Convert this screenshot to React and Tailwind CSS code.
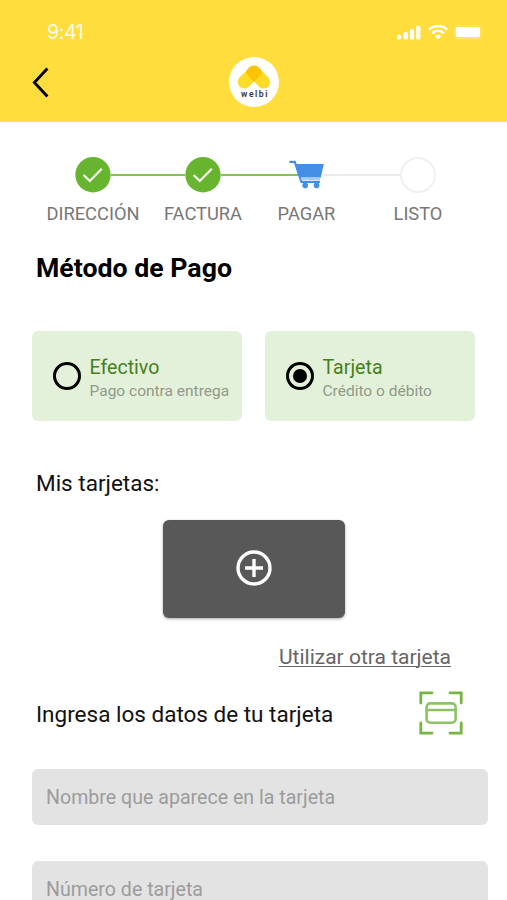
import React, { useState } from 'react';

const BackIcon = () => (
  <svg width="18" height="32" viewBox="0 0 18 32" fill="none" stroke="#000" strokeWidth="2.9">
    <path d="M15.4 2.4 L2.4 16.4 L15.4 30.4" />
  </svg>
);

const SignalIcon = () => (
  <svg width="24" height="16" viewBox="0 0 24 16" fill="#fff">
    <rect x="0.2" y="9.8" width="4.2" height="4.8" rx="1.6" />
    <rect x="6.6" y="7" width="4.2" height="7.6" rx="1.6" />
    <rect x="12.9" y="3.8" width="4.2" height="10.8" rx="1.6" />
    <rect x="19.2" y="0.6" width="4.2" height="14" rx="1.6" />
  </svg>
);

const WifiIcon = () => (
  <svg width="20" height="16" viewBox="0 0 20 16" fill="none" stroke="#fff" strokeWidth="2.6">
    <path d="M1 4.6 C6 -0.2 14 -0.2 19 4.6" />
    <path d="M4.2 8.2 C7.5 5 12.5 5 15.8 8.2" />
    <path d="M10 14.4 L6.8 11 C8.6 9.3 11.4 9.3 13.2 11 Z" fill="#fff" stroke="none" />
  </svg>
);

const BatteryIcon = () => (
  <svg width="32" height="16" viewBox="0 0 32 16">
    <rect x="0.7" y="0.7" width="26.6" height="13" rx="3.2" fill="none" stroke="#fff" strokeOpacity="0.2" strokeWidth="1.4" />
    <path d="M28.6 5 C30.4 5.8 30.4 8.6 28.6 9.4 Z" fill="#fff" fillOpacity="0.25" />
    <rect x="1.8" y="2" width="24.2" height="10.2" rx="1.6" fill="#fff" />
  </svg>
);

const Logo = () => (
  <div className="ml-[2px] w-[50px] h-[50px] rounded-full bg-white flex flex-col items-center pt-[7px]">
    <svg width="36" height="26" viewBox="0 0 36 26" fill="none" strokeLinecap="round" strokeWidth="13">
      <path d="M18 8.4 L8.2 18" stroke="#fedb27" />
      <path d="M18 8.4 L27.8 18" stroke="#fedb27" />
      <path d="M18 1.6 a7 7 0 0 1 5 2 L24.6 5.2 C26 8 26.2 9.6 24.4 11.6 L18 17.4 L11.6 11.6 C9.8 9.6 10 8 11.4 5.2 L13 3.6 a7 7 0 0 1 5 -2 Z" fill="#fcc203" />
    </svg>
    <span className="pl-px text-[8.6px] leading-[9px] font-semibold tracking-[1.5px] text-[#333]">welbi</span>
  </div>
);

const CheckCircle = () => (
  <svg className="shrink-0" width="36" height="36" viewBox="0 0 36 36" fill="none">
    <circle cx="18" cy="17.7" r="17.7" fill="#67b52e" />
    <path d="M8.6 18 L14.8 24 L26.8 11.8" stroke="#f4fbef" strokeWidth="2.3" />
  </svg>
);

const CartIcon = () => (
  <svg className="shrink-0 -ml-2" width="36" height="30" viewBox="0 0 36 30" fill="#448ee6">
    <path d="M0.4 1.8 H5.8 L12.4 22 H31" fill="none" stroke="#448ee6" strokeWidth="2.2" />
    <path d="M6.4 4 H34.8 L31.8 17.4 H10.8 Z" />
    <path d="M11.6 18 H31.4 L31 20.6 H12.6 Z" fill="#a9cbf3" />
    <circle cx="16.2" cy="25.4" r="2.8" />
    <circle cx="27.5" cy="25.4" r="2.8" />
  </svg>
);

const ScanCardIcon = () => (
  <svg width="44" height="44" viewBox="0 0 44 44" fill="none" stroke="#76b543" strokeWidth="2.8" strokeLinecap="round">
    <path d="M1.8 12 V1.8 H13 M31 1.8 H42.2 V12 M42.2 32 V42.2 H31 M13 42.2 H1.8 V32" />
    <rect x="7.6" y="12.4" width="29" height="19.4" rx="3.8" stroke="#8cc264" strokeWidth="2.6" />
    <path d="M7.6 19 H36.6" stroke="#8cc264" strokeWidth="2.4" />
  </svg>
);

const Header = () => (
  <header className="h-[122px] bg-[#ffdd3c]">
    <div className="h-[50px] pt-[15px] pl-[47px] pr-[18px] flex justify-between items-center">
      <span className="font-['Inter'] text-[19.5px] text-white/90 tracking-[-0.4px]">9:41</span>
      <div className="flex items-center gap-[7px]">
        <SignalIcon />
        <WifiIcon />
        <div className="-ml-px pr-[3px]">
          <BatteryIcon />
        </div>
      </div>
    </div>
    <div className="h-[64px] px-8 grid grid-cols-3 items-center">
      <BackIcon />
      <div className="flex justify-center">
        <Logo />
      </div>
    </div>
  </header>
);

const Stepper = () => (
  <div className="pt-[34px]">
    <div className="h-[37px] pl-[75px] flex items-center">
      <CheckCircle />
      <div className="w-[74px] h-[2px] bg-[#83c355]" />
      <CheckCircle />
      <div className="w-[78px] h-[2px] bg-[#83c355]" />
      <div className="-ml-[2px] flex">
        <CartIcon />
      </div>
      <div className="-ml-[2px] w-[77px] h-[2px] bg-[#ebebeb]" />
      <div className="w-9 h-9 rounded-full border-2 border-[#f0f0f0]" />
    </div>
    <div className="mt-2 ml-[38px] flex text-center text-[18.3px] leading-[25px] text-[#777]">
      <span className="w-[110px]">DIRECCIÓN</span>
      <span className="w-[110px]">FACTURA</span>
      <span className="w-[97px]">PAGAR</span>
      <span className="w-[126px]">LISTO</span>
    </div>
  </div>
);

const PaymentOption = ({ title, detail, selected, onSelect }) => (
  <button
    onClick={onSelect}
    className="w-[210px] h-[90px] pl-[21px] rounded-md bg-[#e4f1da] flex items-center gap-[8.5px] text-left"
  >
    <span className="w-[28px] h-[28px] shrink-0 rounded-full border-[3px] border-black flex items-center justify-center">
      {selected && <span className="w-[14px] h-[14px] rounded-full bg-black" />}
    </span>
    <span className="pt-[5px] flex flex-col whitespace-nowrap">
      <span className="text-[19.6px] leading-6 text-[#45801a]">{title}</span>
      <span className="text-[15.5px] leading-[22px] text-[#90998a]">{detail}</span>
    </span>
  </button>
);

const Field = ({ placeholder }) => (
  <input
    type="text"
    placeholder={placeholder}
    className="w-[456px] h-[56px] px-[14px] rounded-md bg-[#e3e3e3] text-[19.6px] text-[#333] placeholder:text-[#9c9c9c] outline-none"
  />
);

export default function App() {
  const [method, setMethod] = useState('tarjeta');

  return (
    <div className="w-[507px] h-[900px] overflow-hidden bg-white font-['Roboto',sans-serif]">
      <Header />
      <Stepper />

      <h1 className="mt-[26px] pl-9 text-[26.7px] leading-8 font-bold text-black">Método de Pago</h1>

      <div className="mt-[47px] pl-8 flex gap-[23px]">
        <PaymentOption
          title="Efectivo"
          detail="Pago contra entrega"
          selected={method === 'efectivo'}
          onSelect={() => setMethod('efectivo')}
        />
        <PaymentOption
          title="Tarjeta"
          detail="Crédito o débito"
          selected={method === 'tarjeta'}
          onSelect={() => setMethod('tarjeta')}
        />
      </div>

      <h2 className="mt-[48px] pl-9 text-[22.5px] leading-7 text-[#111]">Mis tarjetas:</h2>

      <button className="mt-[23px] ml-[163px] w-[182px] h-[98px] pb-[2px] rounded-md bg-[#585858] shadow-[0_1px_3px_rgba(0,0,0,0.35)] flex items-center justify-center">
        <svg width="36" height="36" viewBox="0 0 36 36" fill="none" stroke="#fff" strokeWidth="3.4">
          <circle cx="18" cy="18" r="16" />
          <path d="M18 9 V27 M9 18 H27" />
        </svg>
      </button>

      <div className="mt-[25px] pr-[56px] text-right text-[21px] leading-7 text-[#666]">
        <a className="underline decoration-[1.3px] underline-offset-[2px]">Utilizar otra tarjeta</a>
      </div>

      <div className="mt-[20px] pl-9 pr-[44px] flex justify-between items-center">
        <h2 className="pt-[2px] text-[22.5px] leading-7 text-[#111]">Ingresa los datos de tu tarjeta</h2>
        <ScanCardIcon />
      </div>

      <div className="mt-[34px] pl-8 flex flex-col gap-9">
        <Field placeholder="Nombre que aparece en la tarjeta" />
        <Field placeholder="Número de tarjeta" />
      </div>
    </div>
  );
}
